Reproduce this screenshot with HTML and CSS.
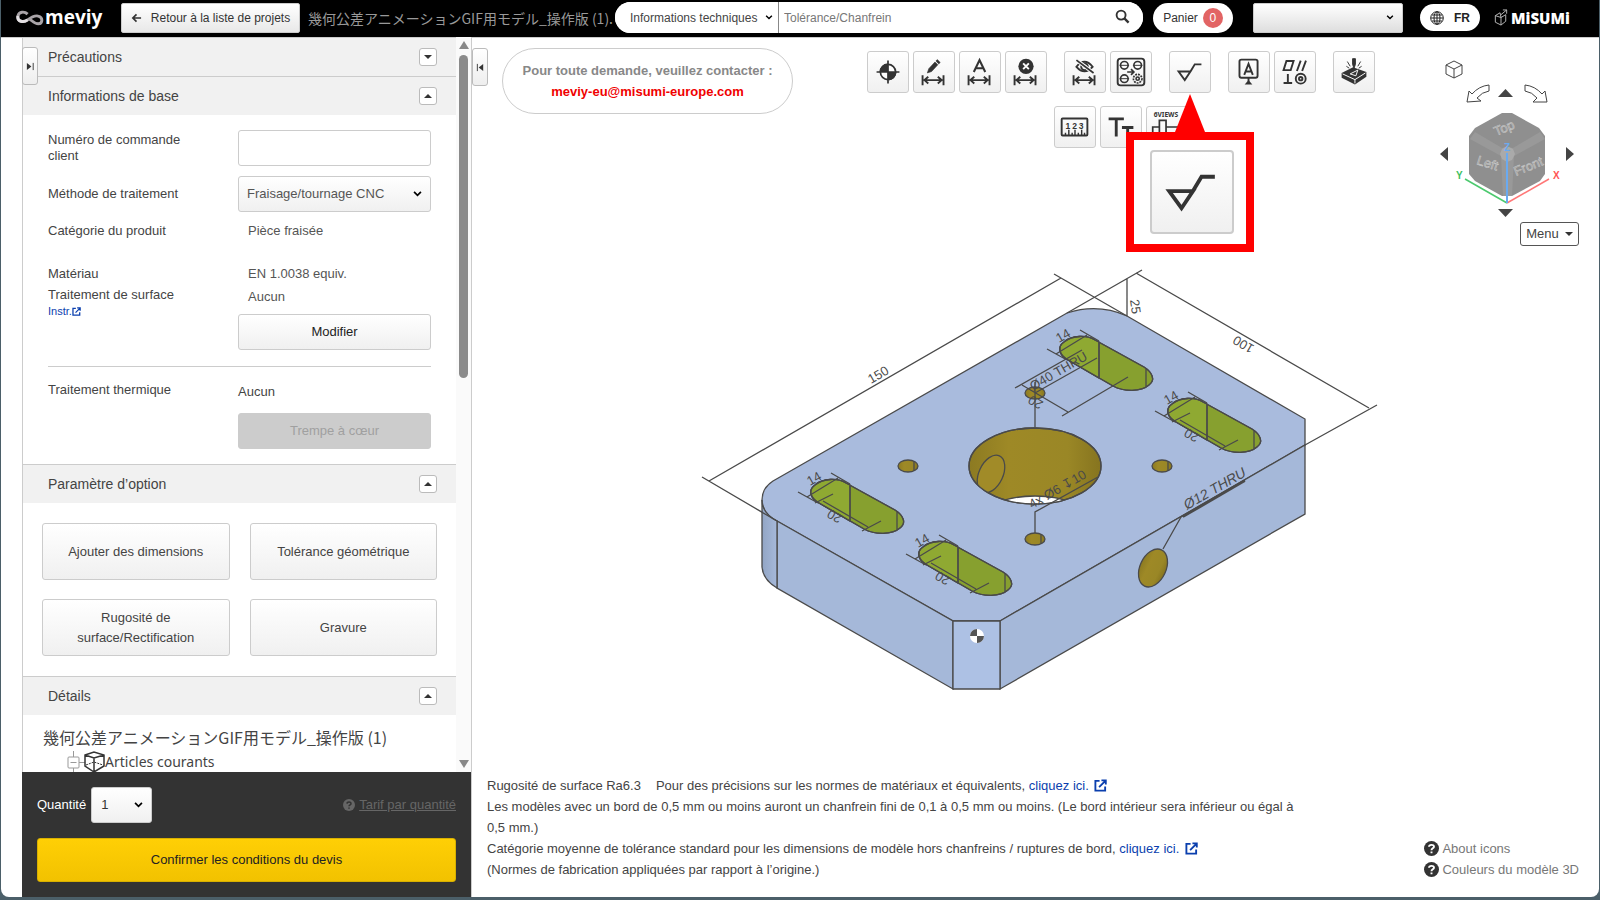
FILE: index.html
```html
<!DOCTYPE html>
<html lang="fr">
<head>
<meta charset="utf-8">
<title>meviy</title>
<link rel="stylesheet" href="styles.css">
</head>
<body>
<svg class="defs" aria-hidden="true">
  <symbol id="ext" viewBox="0 0 14 14"><path d="M6 2H1.500V12.500H12V8M8 1.500H12.700V6M12.500 1.700L5.500 8.700" fill="none" stroke="currentColor" stroke-width="2"/></symbol>
  <symbol id="help" viewBox="0 0 14 14"><circle cx="7" cy="7" r="7" fill="currentColor"/><path d="M4.700 5.400C4.800 3 9.400 3 9.300 5.400C9.300 6.900 7 6.800 7 8.600M7 9.800V11.500" fill="none" stroke="var(--mark)" stroke-width="1.800"/></symbol>
  <symbol id="width" viewBox="0 0 42 42"><path d="M9 27.500V38M31 27.500V38M11 32.500H29M15 29L11 32.500L15 36M25 29L29 32.500L25 36" fill="none" stroke="currentColor" stroke-width="2"/></symbol>
  <symbol id="rough" viewBox="0 0 42 42"><path d="M9 20.500H21.500L15.500 29.500ZM21.500 20.500L26 13H33" fill="none" stroke="currentColor" stroke-width="2"/></symbol>
</svg>
<div class="window">
  <header class="topbar">
    <div class="brand">
      <svg class="loop" viewBox="0 0 30 18" aria-hidden="true"><path d="M12 5C9 2 3 2 2 7C1 13 8 14 12 11C16 8 19 6 23 7C28 8 28 15 23 15C19 15 17 12 14 10" fill="none" stroke="#a9a4a8" stroke-width="3"/><path d="M2 7C1 13 8 14 12 11" fill="none" stroke="#e4e0e3" stroke-width="3"/></svg>
      <span>meviy</span>
    </div>
    <button class="back" type="button"><svg viewBox="0 0 12 12" aria-hidden="true"><path d="M11 6H2M6 2L2 6L6 10" fill="none" stroke="currentColor" stroke-width="1.800"/></svg>Retour à la liste de projets</button>
    <div class="project">幾何公差アニメーションGIF用モデル_操作版 (1).</div>
    <form class="search">
      <select aria-label="Type de recherche"><option>Informations techniques</option></select>
      <input type="text" placeholder="Tolérance/Chanfrein" aria-label="Recherche">
      <button type="button" aria-label="Rechercher"><svg viewBox="0 0 16 16"><circle cx="6.500" cy="6.500" r="4.800" fill="none" stroke="#333" stroke-width="2"/><path d="M10 10L14.500 14.500" stroke="#333" stroke-width="2.500"/></svg></button>
    </form>
    <button class="cart" type="button">Panier<span>0</span></button>
    <select class="account" aria-label="Compte"><option></option></select>
    <button class="lang" type="button"><svg viewBox="0 0 14 14" aria-hidden="true"><g fill="none" stroke="currentColor"><circle cx="7" cy="7" r="6.300"/><ellipse cx="7" cy="7" rx="3" ry="6.300"/><path d="M7 1V13M1 7H13M2 4H12M2 10H12"/></g></svg>FR</button>
    <div class="misumi"><svg viewBox="0 0 14 18" aria-hidden="true"><path d="M1 7L7 9V17L1 14ZM7 9L12 6V13L7 17M1 7L6 4L7 9M7 6L13 1M9 1H13V5" fill="none" stroke="#bbb"/></svg>MiSUMi</div>
  </header>

  <div class="work">
    <aside class="side">
      <button class="tab tab-left" type="button" aria-label="Replier"><svg viewBox="0 0 10 10"><path d="M1 1L6 5L1 9Z" fill="#333"/><path d="M8 1V9" stroke="#333"/></svg></button>
      <div class="scroll">
        <div class="content">
          <h2 class="sec">Précautions<button type="button" aria-label="Ouvrir"><i class="tri down"></i></button></h2>
          <h2 class="sec">Informations de base<button type="button" aria-label="Fermer"><i class="tri up"></i></button></h2>
          <div class="form">
            <div class="row tall"><label for="ref">Numéro de commande client</label><input class="ctl" id="ref" type="text"></div>
            <div class="row mid"><label for="method">Méthode de traitement</label><select class="ctl" id="method"><option>Fraisage/tournage CNC</option></select></div>
            <div class="row cat"><span>Catégorie du produit</span><span class="val">Pièce fraisée</span></div>
            <div class="row mat"><span>Matériau</span><span class="val">EN 1.0038 equiv.</span></div>
            <div class="row surf">
              <div>Traitement de surface<a class="instr" href="#">Instr.<svg aria-hidden="true"><use href="#ext"/></svg></a></div>
              <div class="stack"><span class="val">Aucun</span><button class="btn strong" type="button">Modifier</button></div>
            </div>
            <div class="row heat">
              <span>Traitement thermique</span>
              <div class="stack wide"><span>Aucun</span><button class="btn off" type="button" disabled>Trempe à cœur</button></div>
            </div>
          </div>
          <h2 class="sec">Paramètre d’option<button type="button" aria-label="Fermer"><i class="tri up"></i></button></h2>
          <div class="options">
            <button class="btn" type="button">Ajouter des dimensions</button>
            <button class="btn" type="button">Tolérance géométrique</button>
            <button class="btn" type="button">Rugosité de surface/Rectification</button>
            <button class="btn" type="button">Gravure</button>
          </div>
          <h2 class="sec">Détails<button type="button" aria-label="Fermer"><i class="tri up"></i></button></h2>
          <div class="tree">
            <div class="root">幾何公差アニメーションGIF用モデル_操作版 (1)</div>
            <div class="node"><svg viewBox="0 0 38 22" aria-hidden="true"><path d="M6.500 0V22M12 11.500H18" stroke="#999"/><rect x="1" y="6" width="11" height="11" rx="1" fill="#fff" stroke="#999"/><path d="M3.500 11.500H9.500" stroke="#999"/><path d="M18 4L27 1L37 4V15L27 21L18 15ZM18 4L27 7L37 4M27 7V21" fill="none" stroke="#333" stroke-width="1.500"/><path d="M19 14L27 11L36 14" fill="none" stroke="#333" stroke-dasharray="2 1"/></svg>Articles courants</div>
          </div>
        </div>
        <div class="bar" aria-hidden="true"><i class="tri up big"></i><i class="thumb"></i><i class="tri down big"></i></div>
      </div>
      <div class="order">
        <div class="qty">
          <label for="qty">Quantité</label>
          <select id="qty"><option>1</option></select>
          <a href="#"><svg aria-hidden="true"><use href="#help"/></svg><u>Tarif par quantité</u></a>
        </div>
        <button class="confirm" type="button">Confirmer les conditions du devis</button>
      </div>
    </aside>

    <main class="viewer">
      <svg class="model" viewBox="472 38 1127 859" role="img" aria-label="Modèle 3D">
        <defs>
          <linearGradient id="corner"><stop offset="0" stop-color="#92a5c4"/><stop offset="1" stop-color="#a6b9da"/></linearGradient>
          <linearGradient id="bore"><stop offset="0" stop-color="#8c7a22"/><stop offset=".3" stop-color="#9e8926"/><stop offset=".75" stop-color="#9a8726"/><stop offset="1" stop-color="#86741f"/></linearGradient>
          <clipPath id="boreclip"><ellipse cx="1035" cy="466" rx="66" ry="38"/></clipPath>
          <g id="slot">
            <path d="M846 483L895 510C903 515 907 523 900 528C892 535 875 535 864 529L819 503C810 498 808 490 815 485C823 478 838 478 846 483Z" fill="#87a02f"/>
            <path d="M850 485V521L819 503C810 498 808 490 815 485C823 478 838 478 846 483Z" fill="#8fa932"/>
            <path d="M846 483L895 510C903 515 907 523 900 528C892 535 875 535 864 529L819 503C810 498 808 490 815 485C823 478 838 478 846 483ZM850 485V521M897 511V530"/>
            <path d="M807 497L838 478M798 492L818 503M831 473L850 484"/>
            <text class="dim" x="810" y="486" transform="rotate(-30 810 486)">14</text>
          </g>
          <g id="len">
            <path d="M823 501L868 527M815 503L833 494M862 531L881 521"/>
            <text class="dim" x="843" y="516" transform="rotate(210 843 516)">20</text>
          </g>
        </defs>
        <g class="ink">
          <path d="M773 481L1067 313Q1098 303 1127 316L1305 419V445L1000 621H953L777 521Q762 514 762 500Q762 488 773 481Z" fill="#a9bbdd"/>
          <path d="M777 521L953 621V689L777 588Z" fill="#a5b8d9"/>
          <path d="M762 500V567Q763 580 777 588V521Q762 513 762 500Z" fill="url(#corner)"/>
          <path d="M1000 621L1305 445V514L1000 689Z" fill="#a5b8d9"/>
          <path d="M953 621H1000V689H953Z" fill="#adc1e4"/>
          <path d="M709 481L1061 278M702 477L777 521M1054 274L1127 316M1136 273L1369 408M1142 270L1067 313M1305 445L1377 405M1127 278V316"/>
          <use href="#slot"/><use href="#len"/>
          <g transform="translate(108 62)"><use href="#slot"/><use href="#len"/></g>
          <g transform="translate(357 -81)"><use href="#slot"/><use href="#len"/></g>
          <use href="#slot" transform="translate(249 -143)"/>
          <g fill="url(#bore)">
            <ellipse cx="1035" cy="466" rx="66" ry="38"/>
            <ellipse cx="908" cy="466" rx="10" ry="6"/><ellipse cx="1035" cy="393" rx="10" ry="6"/><ellipse cx="1162" cy="466" rx="10" ry="6"/><ellipse cx="1035" cy="539" rx="10" ry="6"/>
            <ellipse cx="1153" cy="568" rx="13" ry="20" transform="rotate(25 1153 568)"/>
          </g>
          <path d="M914 461V471M1041 534V544M1168 461V471"/>
          <g clip-path="url(#boreclip)">
            <ellipse cx="1035" cy="534" rx="66" ry="38" fill="#fff"/>
            <ellipse cx="991" cy="474" rx="12" ry="20" transform="rotate(25 991 474)" fill="#a18b28"/>
          </g>
          <ellipse cx="1035" cy="466" rx="66" ry="38"/>
          <path d="M1035 382V427M1035 393L1097 358M1022 385L1068 412M1015 388L1082 350M1062 416L1128 377"/>
          <path d="M1035 533V512L1098 477M1181 517L1163 549M1181 517L1245 480"/>
          <path d="M1183 517L1245 481" stroke-width="2"/>
          <text class="dim" x="871" y="384" transform="rotate(-30 871 384)">150</text>
          <text class="dim" x="1255" y="346" transform="rotate(210 1255 346)">100</text>
          <text class="dim" x="1130" y="300" transform="rotate(82 1130 300)">25</text>
          <text class="dim" x="1044" y="402" transform="rotate(210 1044 402)">20</text>
          <text class="dim" x="1033" y="391" transform="rotate(-30 1033 391)">Ø40 THRU</text>
          <text class="dim" x="1032" y="509" transform="rotate(-30 1032 509)">4x Ø6 ↧10</text>
          <text class="dim slanted" x="1187" y="510" transform="rotate(-30 1187 510)">Ø12 THRU</text>
        </g>
        <circle cx="977" cy="636" r="7" fill="#fff"/><path d="M977 636V629A7 7 0 0 0 970 636ZM977 636V643A7 7 0 0 0 984 636Z" fill="#555"/>
      </svg>

      <div class="head">
        <button class="tab tab-right" type="button" aria-label="Agrandir"><svg viewBox="0 0 10 10"><path d="M8 1L3 5L8 9Z" fill="#333"/><path d="M1.500 1V9" stroke="#333"/></svg></button>
        <div class="contact"><span>Pour toute demande, veuillez contacter :</span><a href="#">meviy-eu@misumi-europe.com</a></div>
        <div class="tools">
          <div class="line">
            <div class="group">
              <button class="tool" type="button" aria-label="Origine"><svg viewBox="0 0 42 42"><circle cx="21" cy="21" r="8" fill="#fff" stroke="#333" stroke-width="1.800"/><path d="M21 21V13A8 8 0 0 0 13 21ZM21 21V29A8 8 0 0 0 29 21ZM21 9V33M9 21H33" fill="#333" stroke="#333" stroke-width="1.800"/></svg></button>
              <button class="tool" type="button" aria-label="Modifier la cote"><svg viewBox="0 0 42 42"><use href="#width" y="-3"/><path d="M14 22L15.500 17.500L22 10.500L25 13.500L18.500 20.500ZM23 9.500L24.500 8L27.500 11L26 12.500Z" fill="#333" stroke="#333" stroke-width=".6"/></svg></button>
              <button class="tool" type="button" aria-label="Texte de cote"><svg viewBox="0 0 42 42"><use href="#width" y="-3"/><path d="M14.500 21L20.500 8.500L26.500 21M17 17H24" fill="none" stroke="#333" stroke-width="2.200"/></svg></button>
              <button class="tool" type="button" aria-label="Supprimer la cote"><svg viewBox="0 0 42 42"><use href="#width" y="-3"/><circle cx="21" cy="15" r="8" fill="#333"/><path d="M18 12L24 18M24 12L18 18" stroke="#fff" stroke-width="2"/></svg></button>
            </div>
            <div class="group">
              <button class="tool" type="button" aria-label="Masquer la cote"><svg viewBox="0 0 42 42"><use href="#width" y="-3"/><path d="M12 15.500Q20.500 5 29 15.500Q20.500 25 12 15.500Z" fill="none" stroke="#333" stroke-width="2"/><circle cx="20.500" cy="15.500" r="3.500" fill="none" stroke="#333" stroke-width="2"/><path d="M12 8.500L30 22" stroke="#f9f9f9" stroke-width="4"/><path d="M12 8.500L30 22" stroke="#333" stroke-width="1.800"/></svg></button>
              <button class="tool" type="button" aria-label="Copier les trous"><svg viewBox="0 0 42 42"><g fill="none" stroke="#333" stroke-width="1.700"><rect x="7" y="7" width="28" height="28" rx="3" stroke-width="2"/><circle cx="14" cy="14" r="4"/><circle cx="28" cy="14" r="4"/><circle cx="14" cy="28" r="4"/><circle cx="28" cy="28" r="4.500" stroke-dasharray="2 1"/><circle cx="28" cy="28" r="1.700"/><path d="M9 14H19M23 14H33M9 28H19" stroke-width="1"/><path d="M17 21H24M21 18L24 21L21 24" stroke-width="1.800"/></g></svg></button>
            </div>
            <div class="group">
              <button class="tool" type="button" aria-label="Rugosité"><svg viewBox="0 0 42 42"><use href="#rough"/></svg></button>
            </div>
            <div class="group">
              <button class="tool" type="button" aria-label="Référence"><svg viewBox="0 0 42 42"><g fill="none" stroke="#333" stroke-width="2"><rect x="11" y="8" width="19" height="19" rx="2"/><path d="M16 24L20.500 12.500L25 24M17.500 20.500H23.500M20.500 27V31"/></g><path d="M16.500 34L20.500 29.500L24.500 34Z" fill="#333"/></svg></button>
              <button class="tool" type="button" aria-label="Tolérance géométrique"><svg viewBox="0 0 42 42"><g fill="none" stroke="#333" stroke-width="2"><path d="M9 19L12 9.500H19.500L16.500 19ZM23 20L27 9M28.500 20L32.500 9M9 32.500H18M13.500 23V32"/><circle cx="27" cy="28" r="5.200"/><circle cx="27" cy="28" r="1.800"/></g></svg></button>
            </div>
            <div class="group">
              <button class="tool" type="button" aria-label="Gravure"><svg viewBox="0 0 42 42"><path d="M8 22L20 16L34 21V26L22 34L8 27Z" fill="#333"/><path d="M9 23L22 29L33 22M22 29V33" fill="none" stroke="#fff"/><path d="M17 23L25 19L23 25Z" fill="none" stroke="#fff"/><path d="M19.500 7H22.500V13L21 17L19.500 13ZM14 10L17 15M13 15L16 17M28 10L25 15M29 15L26 17" fill="#333" stroke="#333"/></svg></button>
            </div>
          </div>
          <div class="line">
            <div class="group">
              <button class="tool" type="button" aria-label="Mesurer"><svg viewBox="0 0 42 42"><rect x="7" y="12" width="27" height="18" rx="1" fill="none" stroke="#333" stroke-width="2"/><path d="M11 30V27M14.500 30V24M18 30V27M21 30V24M24.500 30V27M28 30V24M31 30V27" stroke="#333" stroke-width="1.500"/><text class="digits" x="11" y="23"><tspan x="11">1</tspan><tspan x="18">2</tspan><tspan x="25">3</tspan></text></svg></button>
              <button class="tool" type="button" aria-label="Taille du texte"><svg viewBox="0 0 42 42"><path d="M8 12.500H24M16 12.500V31M22 21.500H34M28 21.500V31" fill="none" stroke="#333" stroke-width="3"/></svg></button>
              <button class="tool" type="button" aria-label="6 vues"><svg viewBox="0 0 42 42"><text class="views" x="7" y="11">6VIEWS</text><path d="M13 21V14H20V21H33V28H6V21ZM13 21V34H20V21M20 28V34" fill="none" stroke="#333" stroke-width="1.800"/></svg></button>
            </div>
          </div>
          <div class="callout">
            <svg class="pointer" viewBox="0 0 30 38" aria-hidden="true"><path d="M15 0L30 38H0Z" fill="red"/></svg>
            <div class="frame"><div class="zoomed"><svg viewBox="0 0 42 42" aria-hidden="true"><use href="#rough"/></svg></div></div>
          </div>
        </div>
        <div class="nav">
          <svg viewBox="0 0 145 160" role="img" aria-label="Orientation">
            <g fill="#fff" stroke="#444" stroke-width="1">
              <path d="M12 10L20 6L28 10V19L20 23L12 19ZM12 10L20 14L28 10M20 14V23"/>
              <path d="M55 30V36Q48 37 43 43L47 46L33 47L35 36L38 39Q45 31 55 30Z"/>
              <path d="M91 30V36Q98 37 103 43L99 47L113 47L111 36L108 39Q101 31 91 30Z"/>
            </g>
            <path d="M64 42H79L71.500 34ZM64 154H79L71.500 162ZM14 92V106L6 99ZM132 92V106L140 99Z" fill="#444"/>
            <path d="M68 58H78L105 73L111 81V119L106 126L78 141H68L41 126L35 119V81L41 73Z" fill="#8f8f8f"/>
            <path d="M41 77L68 93L73 92L79 93L106 77L111 84L80 101L78 141H69L67 101L36 84Z" fill="#999"/>
            <path d="M68 94L73 91L79 94L81 99L78 105L73 107L68 104L66 99Z" fill="#aaa"/>
            <g class="faces"><text x="62" y="81" transform="rotate(-22 62 81)">Top</text><text x="42" y="109" transform="rotate(18 42 109)">Left</text><text x="82" y="121" transform="rotate(-22 82 121)">Front</text></g>
            <g fill="none" stroke-width="1.500"><path d="M73 148L31 124" stroke="#4cc96e"/><path d="M73 148L115 124" stroke="#f77"/><path d="M73 148V98" stroke="#6aaaf0" stroke-width="2"/></g>
            <g class="axes"><text x="22" y="124" fill="#3bbf5e">Y</text><text x="119" y="124" fill="#f55">X</text><text x="70" y="96" fill="#6aaaf0">Z</text></g>
          </svg>
          <button class="menu" type="button">Menu<i class="tri down"></i></button>
        </div>
      </div>

      <div class="notes">
        <div class="text">
          <p>Rugosité de surface Ra6.3<span class="gap"></span>Pour des précisions sur les normes de matériaux et équivalents, <a href="#">cliquez ici. <svg aria-hidden="true"><use href="#ext"/></svg></a></p>
          <p>Les modèles avec un bord de 0,5 mm ou moins auront un chanfrein fini de 0,1 à 0,5 mm ou moins. (Le bord intérieur sera inférieur ou égal à 0,5 mm.)</p>
          <p>Catégorie moyenne de tolérance standard pour les dimensions de modèle hors chanfreins / ruptures de bord, <a href="#">cliquez ici. <svg aria-hidden="true"><use href="#ext"/></svg></a></p>
          <p>(Normes de fabrication appliquées par rapport à l’origine.)</p>
        </div>
        <div class="helps">
          <a href="#"><svg aria-hidden="true"><use href="#help"/></svg>About icons</a>
          <a href="#"><svg aria-hidden="true"><use href="#help"/></svg>Couleurs du modèle 3D</a>
        </div>
      </div>
    </main>
  </div>
</div>
</body>
</html>
```
FILE: styles.css
```css
* { box-sizing: border-box; }
body {
  margin: 0;
  height: 100vh;
  padding: 0 1px 3px;
  background: #4b5f69;
  color: #444;
  font: 13px/16px "Liberation Sans", "Noto Sans CJK JP", sans-serif;
}
button, input, select { font: inherit; color: inherit; margin: 0; }
button { cursor: pointer; }
a { color: #0b3fae; text-decoration: none; }
h2, p { margin: 0; font-weight: 400; }
.defs { position: absolute; width: 0; height: 0; }
.window {
  height: 100%;
  display: flex;
  flex-direction: column;
  background: #fff;
  border-radius: 0 0 8px 8px;
  overflow: hidden;
}

select {
  appearance: none;
  background-repeat: no-repeat;
  background-image: url("data:image/svg+xml,%3Csvg xmlns='http://www.w3.org/2000/svg' viewBox='0 0 10 7'%3E%3Cpath d='M1 1L5 5L9 1' fill='none' stroke='black' stroke-width='2'/%3E%3C/svg%3E"), linear-gradient(#fff, #f0f0f0);
  background-size: 9px 6px, 100% 100%;
  background-position: right 8px center, 0 0;
}

/* Top bar */
.topbar {
  display: flex;
  align-items: center;
  height: 37px;
  flex: none;
  background: #000;
  padding: 0 28px 2px 15px;
}
.brand { display: flex; align-items: center; width: 105px; color: #fff; font: 700 19px/24px "Open Sans", sans-serif; }
.brand span { padding-bottom: 1px; }
.loop { width: 29px; height: 18px; }
.back {
  display: flex;
  align-items: center;
  justify-content: center;
  gap: 9px;
  width: 179px;
  height: 30px;
  padding: 0;
  border: 1px solid #ccc;
  border-radius: 2px;
  background: linear-gradient(#fff, #e8e8e8);
  color: #333;
  font-size: 12px;
}
.back svg { width: 11px; height: 12px; }
.project { flex: none; width: 315px; padding-left: 8px; overflow: hidden; white-space: nowrap; color: #999; font: 14px/20px "Noto Sans CJK JP", sans-serif; }
.search { display: flex; flex: 1; height: 31px; background: #fff; border-radius: 16px; overflow: hidden; font-size: 12px; }
.search select { width: 164px; border: 0; border-right: 1px solid #888; padding: 0 0 0 15px; background-color: #fff; background-size: 8px 5px, 0 0; background-position: right 5px center, 0 0; }
.search input { flex: 1; min-width: 0; border: 0; padding: 0 5px; background: #fff; }
.search input::placeholder { color: #777; }
.search button { width: 42px; border: 0; padding: 0; background: #fff; }
.search svg { width: 15px; height: 15px; display: block; margin: 0 auto 3px; }
.cart { display: flex; align-items: center; justify-content: center; gap: 5px; width: 80px; height: 30px; margin: 0 20px 0 10px; padding: 0; border: 0; border-radius: 15px; background: #fff; font-size: 12px; color: #333; }
.cart span { width: 20px; line-height: 20px; border-radius: 10px; background: #e26464; color: #fff; }
.account { width: 150px; height: 30px; border: 1px solid #ccc; border-radius: 2px; background-image: url("data:image/svg+xml,%3Csvg xmlns='http://www.w3.org/2000/svg' viewBox='0 0 10 7'%3E%3Cpath d='M1 1L5 5L9 1' fill='none' stroke='black' stroke-width='2'/%3E%3C/svg%3E"), linear-gradient(#fff, #dedede); background-size: 8px 5px, 100% 100%; }
.lang { display: flex; align-items: center; justify-content: center; gap: 10px; width: 60px; height: 27px; margin: 0 14px 0 17px; padding: 0; border: 0; border-radius: 14px; background: #fff; color: #222; font-size: 12px; font-weight: 700; }
.lang svg { width: 14px; height: 14px; }
.misumi { display: flex; align-items: center; gap: 3px; width: 77px; color: #fff; font: 800 15px/20px "Open Sans", sans-serif; }
.misumi svg { width: 14px; height: 17px; }

/* Layout */
.work { flex: 1; min-height: 0; display: flex; border-top: 1px solid #ccc; }
.side { position: relative; flex: none; width: 471px; padding-left: 21px; display: flex; flex-direction: column; margin-top: -1px; border-right: 1px solid #ccc; }
.scroll { flex: 1; min-height: 0; display: flex; border-left: 1px solid #ccc; }
.content { flex: 1; overflow: hidden; }
.bar { width: 15px; background: #fafafa; display: flex; flex-direction: column; align-items: center; padding: 4px 0; gap: 6px; }
.thumb { flex: none; width: 9px; height: 323px; border-radius: 5px; background: #8b8b8b; margin-bottom: auto; }
.tri { display: block; width: 0; height: 0; border: 0 solid transparent; border-width: 0 4px; }
.tri.up { border-bottom: 4px solid #333; }
.tri.down { border-top: 4px solid #333; }
.tri.big { border-left-width: 5px; border-right-width: 5px; }
.tri.big.up { border-bottom: 8px solid #888; }
.tri.big.down { border-top: 8px solid #888; }
.tab { width: 16px; height: 38px; padding: 0; border: 1px solid #bbb; border-radius: 3px; background: linear-gradient(#fff, #eee); display: flex; align-items: center; justify-content: center; }
.tab svg { width: 9px; height: 9px; }
.tab-left { position: absolute; left: 21px; top: 10px; }

/* Side panel */
.sec { display: flex; align-items: center; justify-content: space-between; height: 39px; padding: 0 19px 0 25px; border-top: 1px solid #ccc; background: #f1f1f1; font-size: 14px; }
.sec button { width: 18px; height: 18px; padding: 0; border: 1px solid #bbb; border-radius: 3px; background: #fff; display: flex; align-items: center; justify-content: center; }
.form { padding: 15px 25px; }
.row { display: grid; grid-template-columns: 190px 1fr; align-items: center; }
.row label { padding-right: 40px; }
.val { padding-left: 10px; color: #555; }
.ctl { width: 100%; height: 36px; border: 1px solid #ccc; border-radius: 3px; padding: 0 8px; }
.mid { margin-top: 10px; }
.mid select { color: #555; }
.cat { margin-top: 11px; }
.mat { margin-top: 27px; }
.surf { margin-top: 5px; align-items: start; padding-bottom: 16px; border-bottom: 1px solid #ccc; }
.heat { margin-top: 15px; align-items: start; }
.instr { display: flex; align-items: center; font-size: 11px; }
.instr svg { width: 9px; height: 9px; }
.stack { display: flex; flex-direction: column; gap: 9px; padding-top: 2px; }
.stack.wide { gap: 13px; }
.btn { height: 36px; border: 1px solid #ccc; border-radius: 3px; background: linear-gradient(#fff, #f0f0f0); line-height: 20px; }
.btn.strong { color: #222; }
.btn.off { background: #ccc; color: #a0a0a0; border-color: #ccc; }
.options { display: grid; grid-template-columns: 1fr 1fr; gap: 19px 20px; padding: 20px 19px; }
.options .btn { height: 57px; padding: 0 30px; }
.options .btn:nth-child(-n+2) { padding: 0; }
.tree { padding: 11px 20px; font-family: "Noto Sans CJK JP", sans-serif; }
.root { font-size: 16px; line-height: 22px; white-space: nowrap; }
.node { display: flex; align-items: center; margin: 3px 0 0 24px; font: 14px/22px "Noto Sans", sans-serif; }
.node svg { width: 38px; height: 22px; }
.order { flex: none; background: #333; padding: 15px; color: #fff; }
.qty { display: flex; align-items: center; gap: 5px; }
.qty select { width: 61px; height: 36px; border: 1px solid #ccc; border-radius: 3px; padding: 0 9px; color: #333; }
.qty a { --mark: #333; margin-left: auto; display: flex; align-items: center; gap: 4px; color: #666; }
.qty svg { width: 12px; height: 12px; }
.confirm { display: block; width: 100%; height: 44px; margin-top: 15px; border: 1px solid #d8b000; border-radius: 3px; background: linear-gradient(#ffcf05, #f2c200); color: #222; }

/* Viewer */
.viewer { position: relative; flex: 1; min-width: 0; display: flex; flex-direction: column; justify-content: space-between; }
.model { position: absolute; left: 0; top: 0; width: 100%; height: 100%; }
.ink { fill: none; stroke: #4a4a4a; stroke-width: 1.3px; }
.dim { fill: #4a4a4a; stroke: none; font-size: 13px; }
.slanted { font-size: 14px; font-style: italic; }
.head { position: relative; display: flex; align-items: flex-start; padding: 10px 20px 0 0; }
.contact { display: flex; flex-direction: column; align-items: center; width: 291px; height: 66px; margin-left: 14px; padding-top: 11px; border: 1px solid #ccc; border-radius: 33px; font-weight: 700; line-height: 21px; color: #888; }
.contact a { color: #f00000; }
.tools { position: relative; flex: 1; margin-top: 3px; display: flex; flex-direction: column; gap: 13px; align-items: center; padding-left: 14px; }
.line { display: flex; gap: 17px; }
.group { display: flex; gap: 4px; }
.tool { width: 42px; height: 42px; padding: 0; border: 1px solid #ccc; border-radius: 3px; background: linear-gradient(#fff, #f0f0f0); color: #333; }
.tool svg { display: block; width: 40px; height: 40px; }
.digits { font: 700 9px "Liberation Sans", sans-serif; fill: #333; }
.views { font: 700 7px "Noto Sans", sans-serif; fill: #333; }
.callout { position: absolute; top: 43px; left: calc(50% + 12px); display: flex; flex-direction: column; align-items: center; width: 128px; }
.pointer { width: 30px; height: 38px; }
.frame { width: 128px; height: 120px; padding-left: 4px; border: 8px solid red; background: #fff; display: flex; align-items: center; justify-content: center; }
.zoomed { width: 84px; height: 84px; border: 2px solid #ccc; border-radius: 4px; background: linear-gradient(#fff, #f0f0f0); color: #333; }
.zoomed svg { display: block; width: 80px; height: 80px; }
.nav { display: flex; flex-direction: column; align-items: flex-end; gap: 7px; margin-top: 7px; }
.nav svg { width: 145px; height: 160px; overflow: visible; }
.faces { fill: #999; stroke: #ccc; stroke-width: .5px; font-size: 13px; }
.axes { font-size: 10px; font-weight: 700; }
.menu { display: flex; align-items: center; justify-content: center; gap: 6px; width: 59px; height: 24px; padding: 0; border: 1px solid #555; border-radius: 3px; background: #fff; }
.notes { position: relative; display: flex; justify-content: space-between; align-items: flex-end; padding: 0 20px 17px 15px; line-height: 21px; }
.text { width: 820px; }
.text svg { width: 13px; height: 13px; vertical-align: -2px; margin-left: 2px; }
.gap { display: inline-block; width: 15px; }
.helps { display: flex; flex-direction: column; }
.helps a { --mark: #fff; display: flex; align-items: center; gap: 3px; color: #777; }
.helps svg { width: 15px; height: 15px; color: #333; }
```
